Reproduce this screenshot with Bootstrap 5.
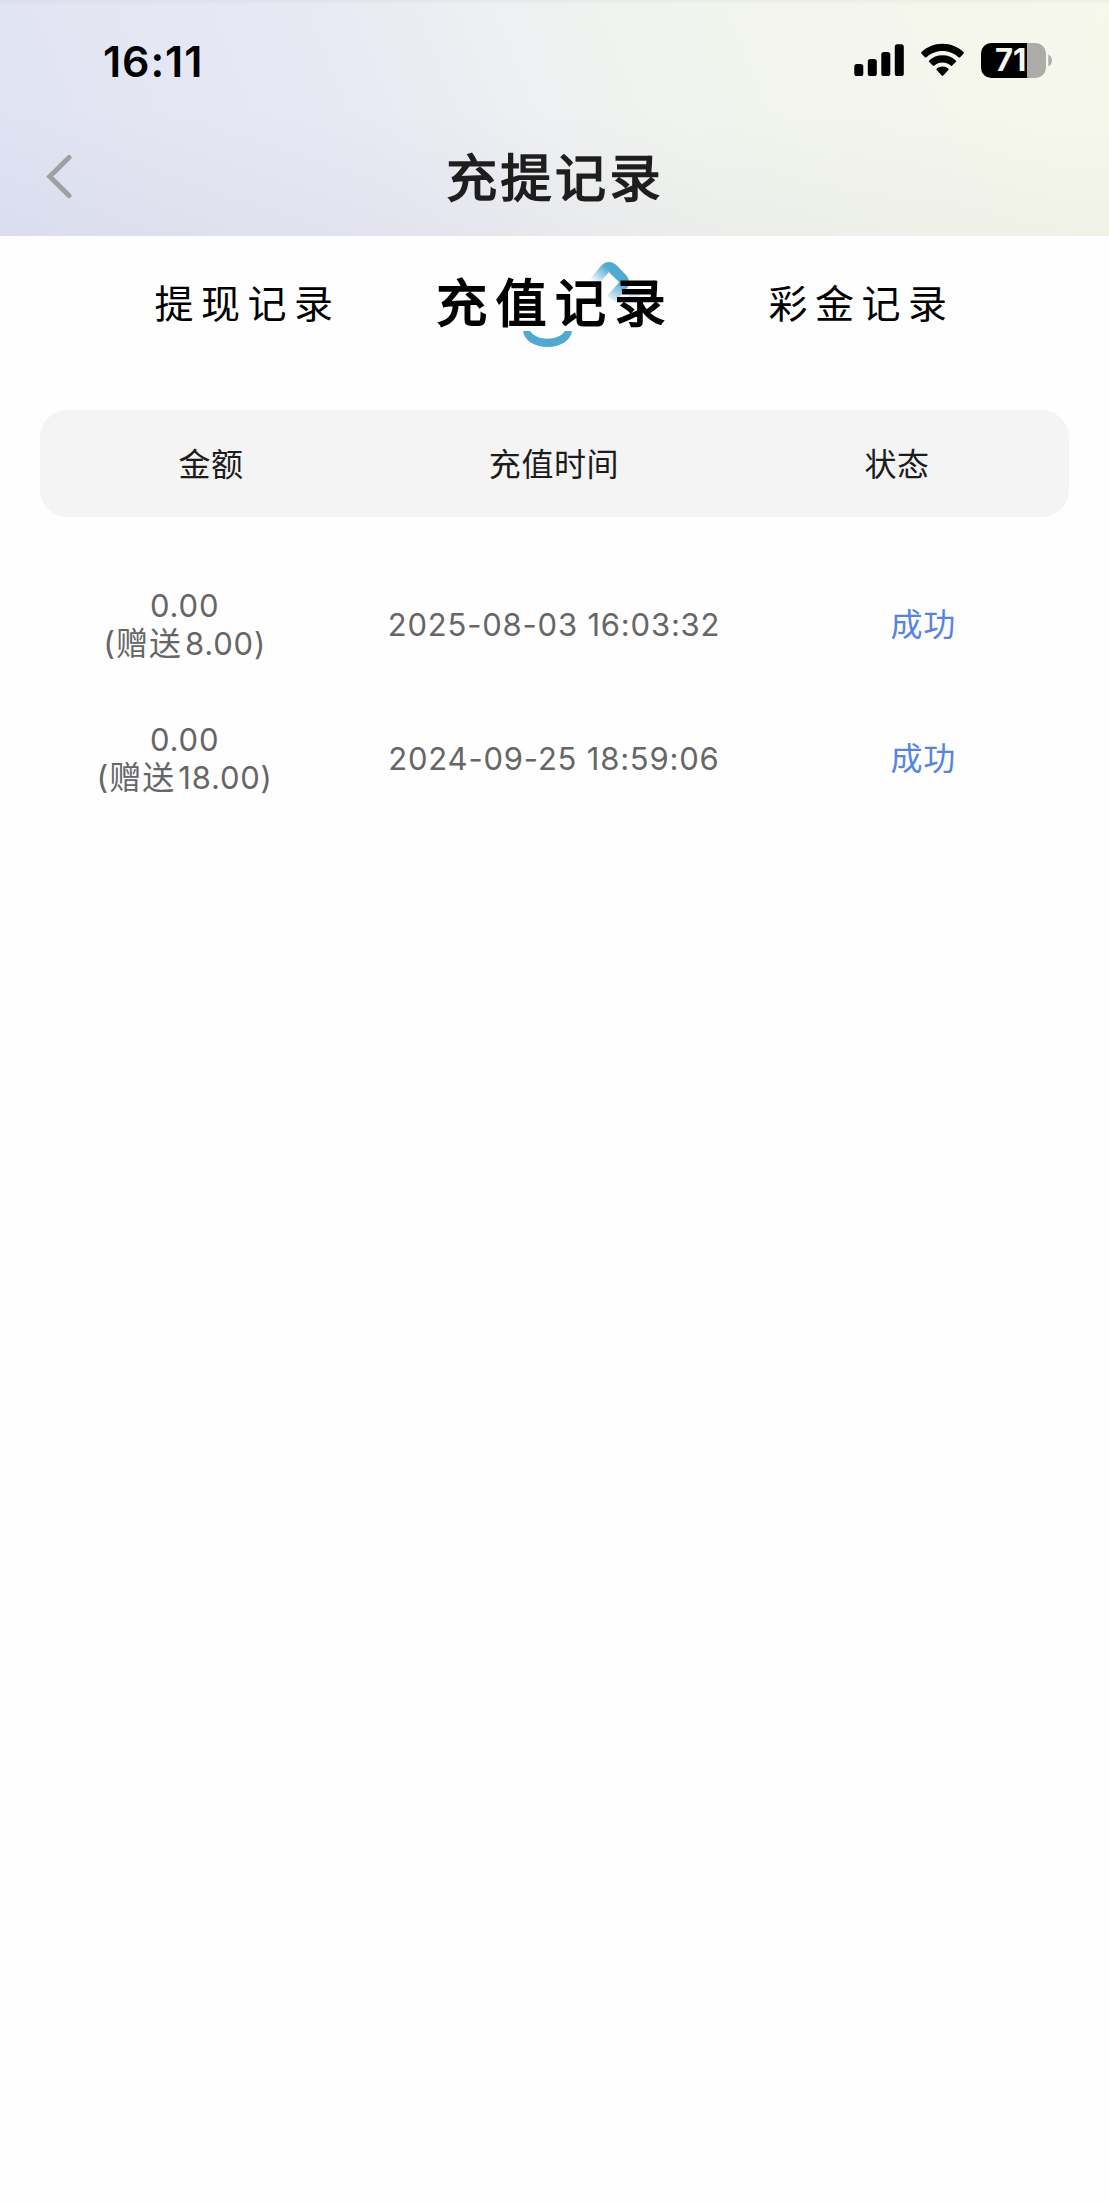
<!DOCTYPE html>
<html lang="zh-CN">
<head>
<meta charset="utf-8">
<meta name="viewport" content="width=device-width, initial-scale=1">
<title>充提记录</title>
<link href="https://cdn.jsdelivr.net/npm/bootstrap@5.3.0/dist/css/bootstrap.min.css" rel="stylesheet">
<style>
  body { font-family: Inter, "Noto Sans CJK SC", sans-serif; background: #fefefe; color: #000; min-height: 2204px; }
  .app-head { height: 236px; background:
      linear-gradient(180deg, rgba(190,190,200,.16) 0, rgba(190,190,200,0) 5px),
      linear-gradient(180deg, rgba(0,0,0,0) 45%, rgba(40,40,60,.026) 100%),
      linear-gradient(68deg, #dfe2f3 0%, #e4e6f3 18%, #e8e9f3 34%, #eff0f2 49%, #f1f4ee 63%, #f4f6ed 80%, #f7f8ec 100%); }
  .status-bar { height: 118px; padding: 0 56px 0 103px; }
  .clock { font-size: 43px; font-weight: 600; line-height: 50px; margin-top: 3px; letter-spacing: .9px; }
  .phone-icons { margin-top: 3px; }
  .nav-row { height: 118px; padding: 0 45px; }
  .nav-side { width: 30px; }
  .page-title { font-size: 51px; line-height: 60px; font-weight: 400; letter-spacing: 3.4px; padding: 3px 0 0 1px; -webkit-text-stroke: 1.7px #1e1e1e; color: #1e1e1e; }
  .record-tabs { height: 136px; padding: 0 94px; }
  .record-tabs .nav-link { color: #000; font-size: 39px; line-height: 50px; letter-spacing: 7.5px; white-space: nowrap; }
  .record-tabs .nav-link.active { font-size: 51px; letter-spacing: 8.4px; padding-left: 1px !important; -webkit-text-stroke: 1.8px #000; }
  .tab-mark { position: absolute; left: 82px; top: -23px; z-index: -1; }
  .list-head { height: 107px; margin: 38px 40.5px 0 39.5px; padding-top: 2px; border-radius: 27px; background: #f4f4f4; color: #1c1c1c; font-size: 32px; letter-spacing: .6px; }
  .list-body { padding-top: 70px; font-size: 31px; line-height: 38px; letter-spacing: .8px; color: #666; }
  .record { height: 76px; margin-bottom: 58px; }
  .gift { font-size: 32px; letter-spacing: 1px; line-height: 1; margin-right: 3px; }
  .ok-state { color: #5584e2; font-size: 32px; padding-right: 1px; }
</style>
<script src="https://cdn.jsdelivr.net/npm/bootstrap@5.3.0/dist/js/bootstrap.bundle.min.js"></script>
</head>
<body>
<header class="app-head">
  <div class="status-bar d-flex justify-content-between align-items-center">
    <div class="clock">16:11</div>
    <svg class="phone-icons" width="200" height="40" viewBox="853 41 200 40" aria-hidden="true">
      <rect x="854.3" y="64" width="9" height="12" rx="2.6"/>
      <rect x="867.8" y="59" width="9" height="17" rx="2.6"/>
      <rect x="881.3" y="52" width="9" height="24" rx="2.6"/>
      <rect x="894.8" y="44.3" width="9" height="31.7" rx="2.6"/>
      <path d="M942.5 43.8c8.200 0 15.600 3.200 21 8.300q.800.800 0 1.700l-3.400 3.400q-.800.700-1.700 0c-4.200-3.900-9.700-6.200-15.900-6.200s-11.700 2.300-15.900 6.200q-.900.700-1.700 0l-3.400-3.400q-.800-.900 0-1.700c5.400-5.100 12.800-8.300 21-8.300z"/>
      <path d="M942.500 55.300c5.200 0 9.800 1.900 13.300 5.100q.800.800 0 1.700l-3.600 3.500q-.800.700-1.600 0c-2.200-1.900-5-3-8.100-3s-5.900 1.100-8.100 3q-.800.700-1.600 0l-3.600-3.500q-.800-.900 0-1.700c3.500-3.200 8.100-5.100 13.300-5.100z"/>
      <path d="M942.500 66.400c2.200 0 4.200.800 5.700 2.200q.800.700 0 1.600l-5 5.200q-.700.700-1.400 0l-5-5.200q-.800-.900 0-1.600c1.500-1.400 3.500-2.200 5.700-2.200z"/>
      <clipPath id="cell"><rect x="981" y="43" width="65" height="35" rx="10.500"/></clipPath>
      <g clip-path="url(#cell)"><rect x="981" y="43" width="65" height="35" fill="#acada7"/><rect x="981" y="43" width="46" height="35"/></g>
      <path d="M1048.300 54.500c2.200.900 3.600 3.200 3.600 6s-1.400 5.100-3.600 6z" fill="#acada7"/>
      <clipPath id="lvl"><rect x="981" y="43" width="45.500" height="35"/></clipPath>
      <text clip-path="url(#lvl)" x="995" y="71.400" font-size="31" font-weight="700" fill="#f6f7ee" letter-spacing="0">71</text>
    </svg>
  </div>
  <div class="nav-row d-flex justify-content-between align-items-center">
    <div class="nav-side d-flex">
      <svg width="28" height="46" viewBox="45 154 28 46" fill="none" stroke="#a0a0a0" stroke-width="5" stroke-linecap="round" aria-label="返回"><path d="M69 157.500 49.800 176.500 69 195.500" /></svg>
    </div>
    <h1 class="page-title mb-0">充提记录</h1>
    <div class="nav-side"></div>
  </div>
</header>
<nav class="record-tabs nav d-flex align-items-center">
  <div class="col d-flex justify-content-center"><a class="nav-link p-0" href="#">提现记录</a></div>
  <div class="col d-flex justify-content-center position-relative z-0">
    <svg class="tab-mark" width="140" height="100" viewBox="483 256 140 100" overflow="visible" fill="none" aria-hidden="true">
      <defs>
        <linearGradient id="fadeL" gradientUnits="userSpaceOnUse" x1="594" y1="283" x2="607" y2="267"><stop stop-color="#4fa9d0" stop-opacity="0"/><stop offset="1" stop-color="#4fa9d0"/></linearGradient>
        <linearGradient id="fadeR" gradientUnits="userSpaceOnUse" x1="622" y1="282" x2="610" y2="301"><stop stop-color="#4fa9d0"/><stop offset="1" stop-color="#4fa9d0" stop-opacity=".08"/></linearGradient>
      </defs>
      <path d="M593 283 604.500 269.500Q609 264.500 613.500 269.500L616 272" stroke="url(#fadeL)" stroke-width="10"/>
      <path d="M613 269 622.500 278.500Q626 282 622.500 286L611 299" stroke="url(#fadeR)" stroke-width="10"/>
      <path d="M630 300 638 292" stroke="#4fa9d0" stroke-opacity=".2" stroke-width="8"/>
      <path d="M523 331H530C537 341.300 558 341.300 565 331H572C571 340 561 347 547.500 347S524 340 523 331Z" fill="#4fa9d0"/>
    </svg>
    <a class="nav-link active p-0" href="#">充值记录</a>
  </div>
  <div class="col d-flex justify-content-center"><a class="nav-link p-0" href="#">彩金记录</a></div>
</nav>
<main>
  <div class="list-head d-flex align-items-center text-center">
    <div class="col">金额</div><div class="col">充值时间</div><div class="col">状态</div>
  </div>
  <div class="list-body">
    <div class="record d-flex align-items-center text-center">
      <div class="col">0.00<br><span class="gift">(赠送</span>8.00)</div><div class="col">2025-08-03 16:03:32</div><div class="col ok-state">成功</div>
    </div>
    <div class="record d-flex align-items-center text-center">
      <div class="col">0.00<br><span class="gift">(赠送</span>18.00)</div><div class="col">2024-09-25 18:59:06</div><div class="col ok-state">成功</div>
    </div>
  </div>
</main>
</body>
</html>
